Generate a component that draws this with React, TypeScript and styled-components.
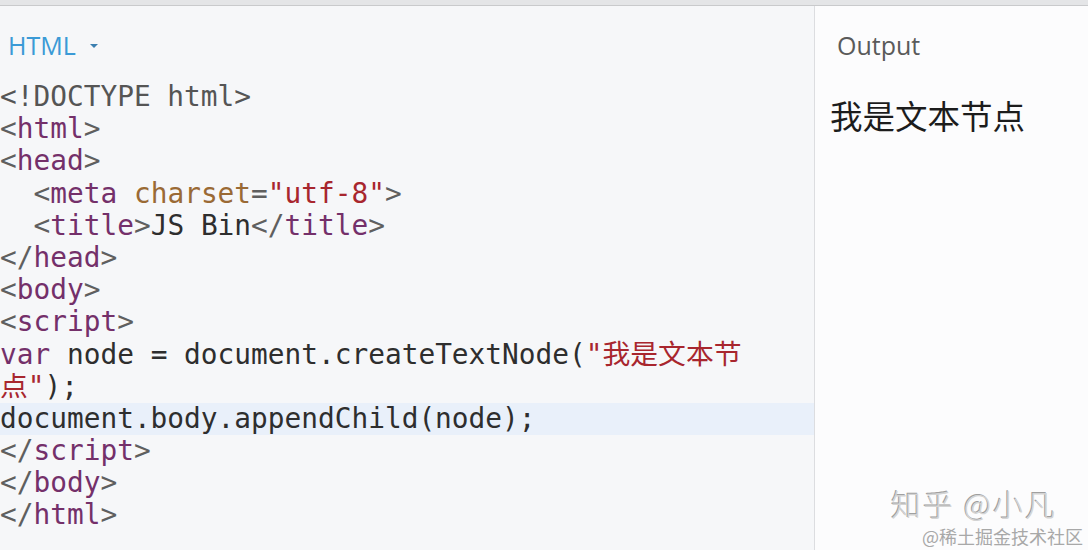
import React from "react";
import styled, { createGlobalStyle } from "styled-components";

const Global = createGlobalStyle`
  html, body { margin: 0; padding: 0; background: #f6f7f9; }
  body { width: 1088px; height: 550px; overflow: hidden; }
`;

const Page = styled.div`
  display: flex;
  flex-direction: column;
  width: 1088px;
  height: 550px;
  overflow: hidden;
`;

const TopBar = styled.div`
  height: 5px;
  background: #e4e5e7;
  border-bottom: 1px solid #c9cacc;
  flex: none;
`;

const Main = styled.div`
  display: flex;
  flex: 1;
  min-height: 0;
`;

const EditorPane = styled.div`
  width: 814px;
  flex: none;
  background: #f6f7f9;
  border-right: 1px solid #dcdde0;
  display: flex;
  flex-direction: column;
`;

const PaneHeader = styled.div`
  display: flex;
  align-items: center;
  gap: 14px;
  height: 68px;
  padding: 10px 0 0 8px;
  box-sizing: border-box;
  font-family: "Open Sans", "Noto Sans", sans-serif;
  font-size: 25px;
  color: #3b9ad6;
`;

const Caret = styled.span`
  width: 0;
  height: 0;
  border-left: 4px solid transparent;
  border-right: 4px solid transparent;
  border-top: 4px solid #3b7fb0;
  margin-top: 2px;
`;

const Code = styled.div`
  padding-top: 7px;
  font-family: "DejaVu Sans Mono", "Noto Sans CJK SC", monospace;
  font-size: 27.8px;
  color: #2e2e2e;
`;

const Line = styled.div<{ $active?: boolean }>`
  height: 32.2px;
  line-height: 32.2px;
  white-space: pre;
  background: ${(p) => (p.$active ? "#e9f0fa" : "transparent")};
`;

const Punct = styled.span`color: #5f5f5f;`;
const Tag = styled.span`color: #74306a;`;
const Attr = styled.span`color: #9a6a35;`;
const Str = styled.span`color: #a8262e;`;
const Kw = styled.span`color: #74306a;`;
const Meta = styled.span`color: #555;`;

const OutputPane = styled.div`
  flex: 1;
  background: #fcfcfd;
  display: flex;
  flex-direction: column;
  padding: 0 0 0 18px;
  position: relative;
`;

const OutputTitle = styled.div`
  height: 68px;
  padding: 10px 0 0 4px;
  box-sizing: border-box;
  display: flex;
  align-items: center;
  font-family: "Open Sans", "Noto Sans", sans-serif;
  font-size: 25px;
  color: #5a5a5a;
`;

const OutputText = styled.div`
  font-family: "Noto Sans CJK SC", sans-serif;
  font-size: 32.5px;
  line-height: 40px;
  color: #1c1c1c;
  margin-top: 21px;
  margin-left: -3px;
`;

const Watermark = styled.div`
  position: absolute;
  right: 5px;
  bottom: 2px;
  display: flex;
  flex-direction: column;
  align-items: flex-end;
  gap: 4px;
  font-family: "Noto Sans CJK SC", sans-serif;
`;

const WmMain = styled.div`
  font-size: 30px;
  line-height: 34px;
  letter-spacing: 2px;
  color: #d4d4d4;
  text-shadow: -1px -1px 0 #a0a0a0;
  font-weight: 300;
  margin-right: 26px;
`;

const WmSub = styled.div`
  font-size: 18px;
  line-height: 24px;
  color: #a8a8a8;
`;

export default function App() {
  return (
    <Page>
      <Global />
      <TopBar />
      <Main>
        <EditorPane>
          <PaneHeader>
            HTML <Caret />
          </PaneHeader>
          <Code>
            <Line><Meta>&lt;!DOCTYPE html&gt;</Meta></Line>
            <Line><Punct>&lt;</Punct><Tag>html</Tag><Punct>&gt;</Punct></Line>
            <Line><Punct>&lt;</Punct><Tag>head</Tag><Punct>&gt;</Punct></Line>
            <Line>{"  "}<Punct>&lt;</Punct><Tag>meta</Tag> <Attr>charset</Attr><Punct>=</Punct><Str>"utf-8"</Str><Punct>&gt;</Punct></Line>
            <Line>{"  "}<Punct>&lt;</Punct><Tag>title</Tag><Punct>&gt;</Punct>JS Bin<Punct>&lt;/</Punct><Tag>title</Tag><Punct>&gt;</Punct></Line>
            <Line><Punct>&lt;/</Punct><Tag>head</Tag><Punct>&gt;</Punct></Line>
            <Line><Punct>&lt;</Punct><Tag>body</Tag><Punct>&gt;</Punct></Line>
            <Line><Punct>&lt;</Punct><Tag>script</Tag><Punct>&gt;</Punct></Line>
            <Line><Kw>var</Kw> node = document.createTextNode(<Str>"我是文本节</Str></Line>
            <Line><Str>点"</Str>);</Line>
            <Line $active>document.body.appendChild(node);</Line>
            <Line><Punct>&lt;/</Punct><Tag>script</Tag><Punct>&gt;</Punct></Line>
            <Line><Punct>&lt;/</Punct><Tag>body</Tag><Punct>&gt;</Punct></Line>
            <Line><Punct>&lt;/</Punct><Tag>html</Tag><Punct>&gt;</Punct></Line>
          </Code>
        </EditorPane>
        <OutputPane>
          <OutputTitle>Output</OutputTitle>
          <OutputText>我是文本节点</OutputText>
          <Watermark>
            <WmMain>知乎 @小凡</WmMain>
            <WmSub>@稀土掘金技术社区</WmSub>
          </Watermark>
        </OutputPane>
      </Main>
    </Page>
  );
}
